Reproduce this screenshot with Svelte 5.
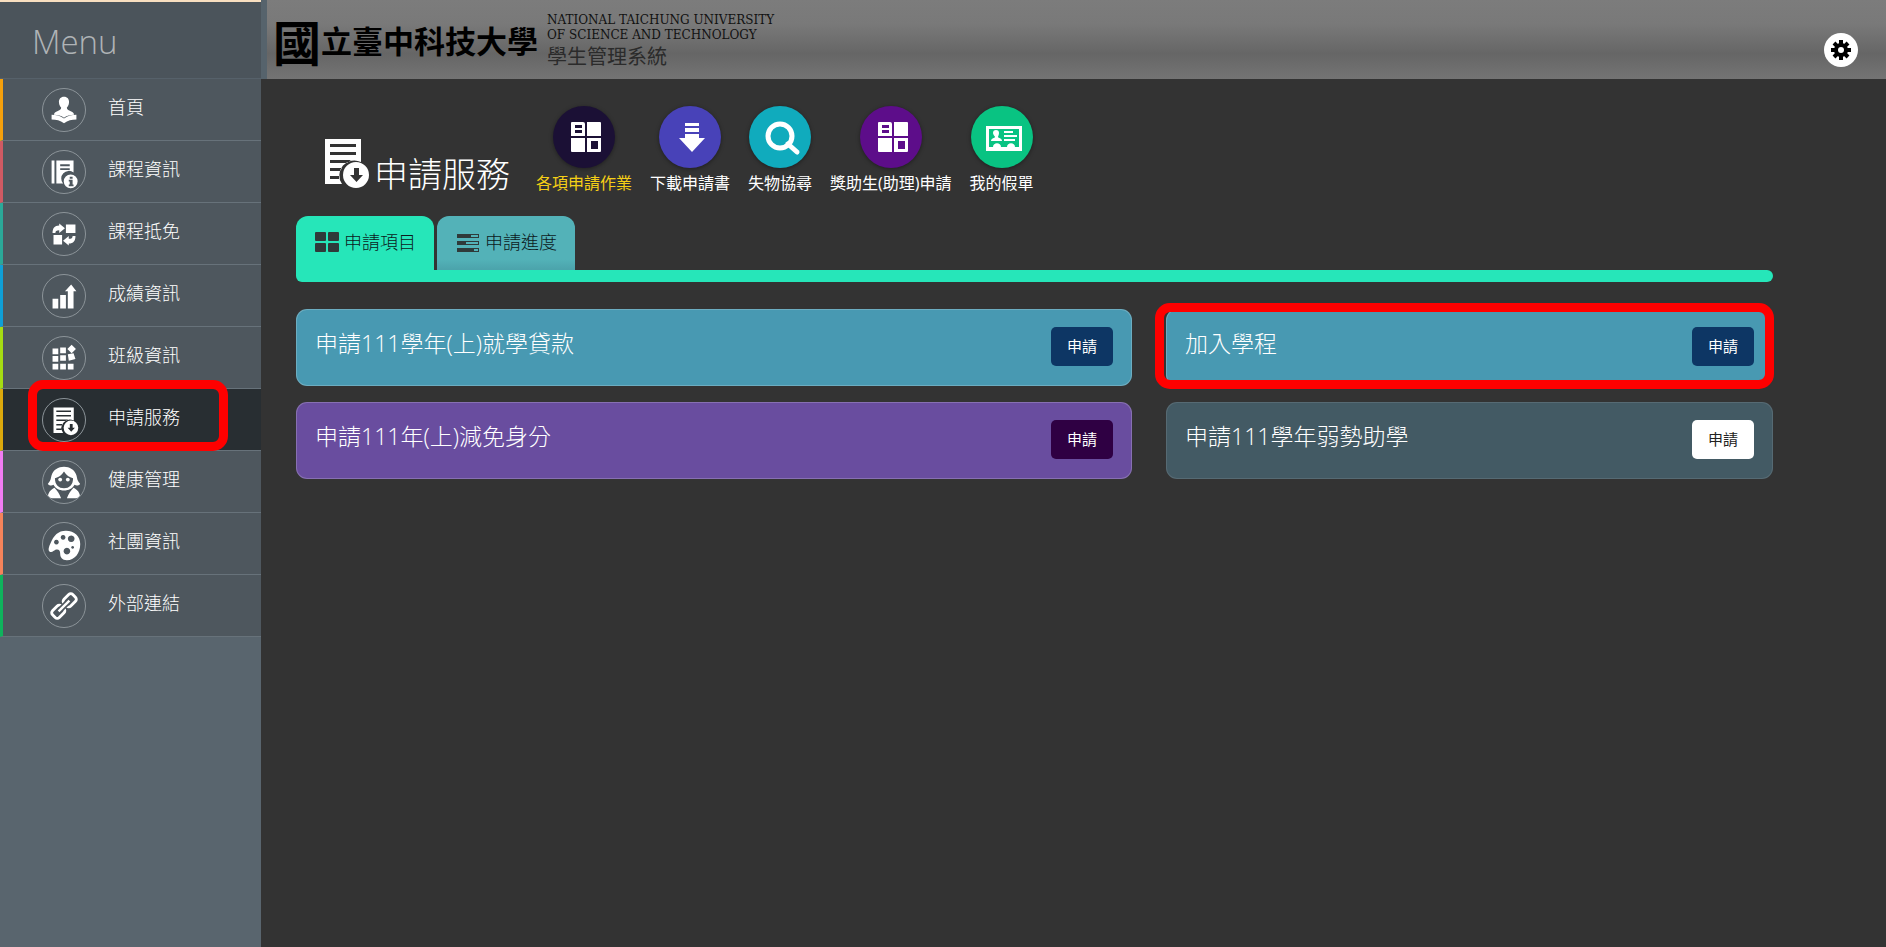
<script lang="ts">
  type MenuItem = { label: string; icon: string; color: string };
  type Shortcut = { label: string; icon: string; color: string };
  type Application = { title: string; theme: string; marked?: boolean };

  const menu: MenuItem[] = [
    { label: "首頁", icon: "reader", color: "#f5a00c" },
    { label: "課程資訊", icon: "course", color: "#cf5a63" },
    { label: "課程抵免", icon: "swap", color: "#2ba898" },
    { label: "成績資訊", icon: "grades", color: "#0f9fd6" },
    { label: "班級資訊", icon: "blocks", color: "#a5dc12" },
    { label: "申請服務", icon: "apply", color: "#dca90c" },
    { label: "健康管理", icon: "health", color: "#f07cf2" },
    { label: "社團資訊", icon: "palette", color: "#f5835a" },
    { label: "外部連結", icon: "link", color: "#0fb35c" },
  ];

  const shortcuts: Shortcut[] = [
    { label: "各項申請作業", icon: "tiles", color: "#1b1035" },
    { label: "下載申請書", icon: "download", color: "#4842b8" },
    { label: "失物協尋", icon: "search", color: "#10abbd" },
    { label: "獎助生(助理)申請", icon: "tiles", color: "#5d0d8a" },
    { label: "我的假單", icon: "card", color: "#09c382" },
  ];

  const applications: Application[] = [
    { title: "申請111學年(上)就學貸款", theme: "blue" },
    { title: "加入學程", theme: "blue", marked: true },
    { title: "申請111年(上)減免身分", theme: "purple" },
    { title: "申請111學年弱勢助學", theme: "slate" },
  ];

  let activeMenu = $state("申請服務");
  let activeShortcut = $state("各項申請作業");
  let activeTab = $state("items");
</script>

{#snippet applyIcon()}
  <path fill="currentColor" fill-rule="evenodd" d="M0 0h36v23a15 15 0 0 0-19 22H0zM5 5v3h26V5zM5 13v3h26v-3zM5 21v3h17l4-3zM5 29v3h10l2-3zM5 37v3h9v-3z" />
  <path fill="currentColor" fill-rule="evenodd" d="M31 23a13 13 0 1 0 0 26 13 13 0 0 0 0-26zM29 29h5v7h4l-6.500 7-6.500-7h4z" />
{/snippet}

{#snippet menuIcon(name: string)}
  <svg class="menu-icon" viewBox="0 0 44 44" fill="currentColor" aria-hidden="true">
    {#if name === "reader"}
      <path d="M22 8c3.500 0 5.500 2.500 5.300 6-.2 3-1.300 4.500-2.300 5.500 0 2 1 2.500 3.500 3.500 2.500 1 4 2 4 4-4 0-7.500 1-10.500 3-3-2-6.500-3-10.500-3 0-2 1.500-3 4-4s3.500-1.500 3.500-3.500c-1-1-2.100-2.500-2.300-5.500C16.500 10.500 18.500 8 22 8z" />
      <path d="M9 27c5 0 9 1 13 4 4-3 8-4 13-4v5c-5 0-9 1-13 4-4-3-8-4-13-4z" />
    {:else if name === "course"}
      <path fill-rule="evenodd" d="M9 10h3v24H9zM14 10h18v12.500a8 8 0 0 0-11 11.500h-7zM18 14v2h10v-2zM18 18v2h10v-2z" />
      <path fill-rule="evenodd" d="M29 24.500a7.300 7.300 0 1 0 0 14.600 7.300 7.300 0 0 0 0-14.600zM28 27h3v2h-3zM27 30h4v5h1v2h-5v-2h1v-3h-1z" />
    {:else if name === "swap"}
      <path d="M24 12h10v9H24zM11 23h9v10h-9z" />
      <path d="M10 21c0-5 2-8 7-8v-2l6 5-6 5v-3c-3 0-4 1-4 3zM34 24c0 5-2 8-7 8v2l-6-5 6-5v3c3 0 4-1 4-3z" />
    {:else if name === "grades"}
      <path d="M10 25h6v10h-6zM18 21h6v14h-6zM26 17h-3l6.500-7 5.500 7h-3v18h-6z" />
    {:else if name === "blocks"}
      <path d="M10 12h6v6h-6zM18 11h6v6h-6zM30 8l4.500 4.500L30 17l-4.500-4.500zM10 20h6v6h-6zM18 19h6v6h-6zM26 18l6-1 2 6-7 2zM10 28h6v6h-6zM18 28h6v6h-6zM26 28h6v6h-6z" />
    {:else if name === "apply"}
      <g transform="translate(11 9) scale(0.59)">{@render applyIcon()}</g>
    {:else if name === "health"}
      <path fill-rule="evenodd" d="M5 24c3-3 3-5 4-9C11 9 16 6 22 6s11 3 13 9c1 4 1 6 4 9-2 2-4 2-6 1-2 4-6 6-11 6s-9-2-11-6c-2 1-4 1-6-1zM12.500 18c0 7 4 10.500 9.500 10.500s9.500-3.500 9.500-10.500c-4-1-7-3-9.500-7-2.500 4-5.500 6-9.500 7z" />
      <circle cx="18" cy="19.500" r="2" />
      <circle cx="26" cy="19.500" r="2" />
      <path d="M5 39c0-6 3-9 7-11 3 3 5 6 7 11zM39 39c0-6-3-9-7-11-3 3-5 6-7 11z" />
    {:else if name === "palette"}
      <path fill-rule="evenodd" d="M24 8c9 0 15 6 15 14 0 10-6 17-14 17-5 0-7-3-7-7 0-4-2-5-5-4-2 1-3 3-6 2-2-1-1-5 1-9C11 13 16 8 24 8zM21 12.500a2.500 2.500 0 1 0 .1 0zM29.500 13a3.500 3.500 0 1 0 .1 0zM14 17.500a2.500 2.500 0 1 0 .1 0zM31 24a1.500 1.500 0 1 0 .1 0zM25 26a3.500 3.500 0 1 0 .1 0z" />
    {:else}
      <g fill="none" stroke="currentColor" stroke-width="3" transform="rotate(-45 22 22)">
        <rect x="7" y="17" width="13" height="10" rx="3" />
        <rect x="24" y="17" width="13" height="10" rx="3" />
        <path class="link-gap" d="M17 22h10" stroke-width="6" />
        <path d="M14 22h16" stroke-width="2.500" />
      </g>
    {/if}
  </svg>
{/snippet}

{#snippet shortcutIcon(name: string)}
  <svg viewBox="0 0 62 62" fill="currentColor" aria-hidden="true">
    {#if name === "tiles"}
      <path fill-rule="evenodd" d="M19 16h11q2 0 2 2v12H18V17q0-1 1-1zM22 19v3h7v-3zM22 24v3h7v-3z" />
      <path fill-rule="evenodd" d="M34 16h13q1 0 1 1v13H34zM18 32h14v14H19q-1 0-1-1zM34 32h14v13q0 1-1 1H34zM38 35v8h7v-8z" />
    {:else if name === "download"}
      <path d="M26 17h14v3H26zM26 22h14v4H26zM26 28h14v4h6L33 46 20 32h6z" />
    {:else if name === "search"}
      <g fill="none" stroke="currentColor">
        <circle cx="31" cy="30" r="12" stroke-width="5" />
        <path d="M39 38l9 8" stroke-width="5" stroke-linecap="round" />
      </g>
    {:else}
      <path fill-rule="evenodd" d="M15 20h36v25H15zM18 23v18h4c0-5 8-5 8 0h6c0-5 8-5 8 0h4V23z" />
      <path d="M25 24c2 0 3 1 3 3s-1 3-1 4c0 1 4 1 4 4H20c0-3 4-3 4-4s-2-2-2-4 1-3 3-3zM33 25h9v2h-9zM33 29h13v2H33zM33 33h11v2H33z" />
    {/if}
  </svg>
{/snippet}

<div class="page" lang="zh-Hant">
  <aside class="sidebar">
    <h2 class="menu-title">Menu</h2>
    <nav>
      {#each menu as item (item.label)}
        <a
          class="menu-item"
          class:active={item.label === activeMenu}
          href="#{item.icon}"
          style="border-left-color: {item.color};"
          onclick={() => (activeMenu = item.label)}
        >
          {@render menuIcon(item.icon)}
          <span class="menu-label">{item.label}</span>
          {#if item.icon === "apply"}
            <span class="marker menu-marker"></span>
          {/if}
        </a>
      {/each}
    </nav>
  </aside>

  <div class="main">
    <header class="banner">
      <span class="brand"><span class="brand-seal">國</span>立臺中科技大學</span>
      <div class="brand-text">
        <span class="brand-en">NATIONAL TAICHUNG UNIVERSITY</span>
        <span class="brand-en">OF SCIENCE AND TECHNOLOGY</span>
        <span class="brand-system">學生管理系統</span>
      </div>
      <button class="settings" aria-label="設定">
        <svg viewBox="0 0 20 20" width="20" height="20" aria-hidden="true">
          <g stroke="#000" stroke-width="4">
            <path d="M10 0v20M0 10h20M3 3l14 14M17 3L3 17" />
          </g>
          <circle cx="10" cy="10" r="7" />
          <circle cx="10" cy="10" r="3" fill="#fff" />
        </svg>
      </button>
    </header>

    <main class="content">
      <div class="hero">
        <h1 class="title">
          <svg viewBox="0 0 44 49" width="44" height="49" aria-hidden="true">{@render applyIcon()}</svg>
          <span>申請服務</span>
        </h1>
        <div class="shortcuts">
          {#each shortcuts as item (item.label)}
            <button
              class="shortcut"
              class:active={item.label === activeShortcut}
              onclick={() => (activeShortcut = item.label)}
            >
              <span class="disc" style="background: {item.color};">{@render shortcutIcon(item.icon)}</span>
              <span class="shortcut-label">{item.label}</span>
            </button>
          {/each}
        </div>
      </div>

      <div class="tabs" role="tablist">
        <button
          class="tab"
          class:selected={activeTab === "items"}
          role="tab"
          aria-selected={activeTab === "items"}
          onclick={() => (activeTab = "items")}
        >
          <svg viewBox="0 0 24 20" width="24" height="20" aria-hidden="true">
            <rect width="11" height="9" rx="1" />
            <rect x="13" width="11" height="9" rx="1" />
            <rect y="11" width="11" height="9" rx="1" />
            <rect x="13" y="11" width="11" height="9" rx="1" />
          </svg>
          申請項目
        </button>
        <button
          class="tab"
          class:selected={activeTab === "progress"}
          role="tab"
          aria-selected={activeTab === "progress"}
          onclick={() => (activeTab = "progress")}
        >
          <svg viewBox="0 0 24 20" width="24" height="20" aria-hidden="true">
            <path fill-rule="evenodd" d="M1 2h22v4H1zM15 3v2h7V3zM1 9h22v4H1zM10 10v2h12v-2zM1 16h22v4H1zM18 17v2h4v-2z" />
          </svg>
          申請進度
        </button>
      </div>
      <div class="tab-bar"></div>

      <div class="cards">
        {#each applications as app (app.title)}
          <section class="card {app.theme}">
            <h3>{app.title}</h3>
            <button class="apply">申請</button>
            {#if app.marked}
              <span class="marker card-marker"></span>
            {/if}
          </section>
        {/each}
      </div>
    </main>
  </div>
</div>

<style>
  :global(body) {
    margin: 0;
    background: #333;
  }

  .page {
    display: grid;
    grid-template-columns: 261px 1fr;
    min-height: 100vh;
    background: #333;
    color: #fff;
    font-family: "Open Sans", "Noto Sans CJK TC", sans-serif;
    font-weight: 300;
  }

  button {
    border: none;
    font-family: inherit;
    cursor: pointer;
  }

  h1,
  h2,
  h3 {
    margin: 0;
    font-weight: 300;
  }

  .sidebar {
    border-top: 2px solid #f8dfc0;
    background: #59656e;
  }

  .menu-title {
    height: 77px;
    padding: 8px 32px;
    border-bottom: 1px solid #56616a;
    box-sizing: border-box;
    background: #4b545b;
    color: #afb3b6;
    font-size: 33px;
    line-height: 64px;
  }

  .menu-item {
    position: relative;
    display: flex;
    align-items: center;
    gap: 22px;
    height: 62px;
    padding-left: 39px;
    border-bottom: 1px solid #67727a;
    border-left: 3px solid;
    box-sizing: border-box;
    background: #4e575e;
    color: #fff;
    text-decoration: none;
  }

  .menu-item.active {
    background: #282e32;
  }

  .menu-icon {
    width: 42px;
    height: 42px;
    border: 1px solid #8c9499;
    border-radius: 50%;
    flex-shrink: 0;
  }

  .link-gap {
    stroke: #4e575e;
  }

  .active .link-gap {
    stroke: #282e32;
  }

  .menu-label {
    padding-bottom: 6px;
    font-size: 18px;
    line-height: 24px;
  }

  .marker {
    position: absolute;
    z-index: 1;
    border: 9px solid #f00;
    border-radius: 15px;
    pointer-events: none;
  }

  .menu-marker {
    inset: -9px 33px -1px 25px;
  }

  .banner {
    display: flex;
    align-items: center;
    gap: 9px;
    height: 79px;
    padding: 0 28px 0 6px;
    border-left: 6px solid #56636c;
    box-sizing: border-box;
    background: linear-gradient(#7c7c7c, #797979 30%, #666 68%, #747474);
    color: #000;
  }

  .brand {
    display: flex;
    align-items: center;
    height: 72px;
    font-size: 31px;
    font-weight: 700;
    white-space: nowrap;
  }

  .brand-seal {
    font-size: 48px;
  }

  .brand-text {
    display: flex;
    flex-direction: column;
    padding-top: 5px;
    white-space: nowrap;
  }

  .brand-en {
    color: #111;
    font-family: "DejaVu Serif", serif;
    font-size: 12px;
    font-weight: 400;
    line-height: 15px;
  }

  .brand-system {
    color: #2b2b2b;
    font-size: 20px;
    font-weight: 400;
    line-height: 28px;
  }

  .settings {
    display: grid;
    place-items: center;
    width: 34px;
    height: 34px;
    margin-top: 21px;
    margin-left: auto;
    padding: 0;
    border-radius: 50%;
    background: #fff;
  }

  .content {
    padding: 27px 113px 40px 35px;
  }

  .hero {
    display: flex;
    gap: 26px;
    height: 88px;
    margin-bottom: 22px;
    padding-left: 29px;
  }

  .title {
    display: flex;
    align-items: flex-end;
    gap: 5px;
    height: 82px;
    font-size: 34px;
    line-height: 28px;
    white-space: nowrap;
  }

  .shortcuts {
    display: flex;
    gap: 18px;
  }

  .shortcut {
    display: flex;
    flex-direction: column;
    align-items: center;
    gap: 4px;
    padding: 0;
    background: none;
    color: #fff;
    font-size: 16px;
    line-height: 22px;
    white-space: nowrap;
  }

  .shortcut.active {
    color: #f5cf16;
  }

  .disc {
    width: 62px;
    height: 62px;
    border-radius: 50%;
    box-shadow: 0 1px 4px #0006;
    color: #fff;
  }

  .tabs {
    display: flex;
    gap: 3px;
  }

  .tab {
    display: flex;
    align-items: center;
    gap: 5px;
    height: 54px;
    padding: 0 18px 2px 19px;
    border-radius: 12px 12px 0 0;
    background: linear-gradient(#53b2b8 80%, #4ba3ab);
    color: #0c1a1d;
    font-size: 18px;
    font-weight: 300;
    line-height: 24px;
  }

  .tab svg {
    fill: #2f3a3a;
  }

  .tab.selected {
    background: #26e6b9;
  }

  .tab-bar {
    height: 12px;
    margin-bottom: 27px;
    border-radius: 0 6px 6px 6px;
    background: #26e6b9;
  }

  .cards {
    display: grid;
    grid-template-columns: 836fr 607fr;
    gap: 16px 34px;
  }

  .card {
    position: relative;
    display: flex;
    align-items: center;
    justify-content: space-between;
    height: 77px;
    padding: 0 18px 2px;
    border: 1px solid #ffffff33;
    border-radius: 11px;
    box-sizing: border-box;
  }

  .card h3 {
    padding-bottom: 8px;
    font-size: 23px;
    line-height: 32px;
  }

  .blue {
    background: #4899b2;
  }

  .purple {
    background: #694d9f;
  }

  .slate {
    background: #435a64;
    border-color: #ffffff1a;
  }

  .apply {
    width: 62px;
    height: 39px;
    padding: 0 0 2px;
    border-radius: 5px;
    background: #0d3664;
    color: #fff;
    font-size: 15px;
  }

  .purple .apply {
    background: #2f0043;
  }

  .slate .apply {
    background: #fff;
    color: #222;
  }

  .card-marker {
    inset: -7px -2px -4px -12px;
  }
</style>
